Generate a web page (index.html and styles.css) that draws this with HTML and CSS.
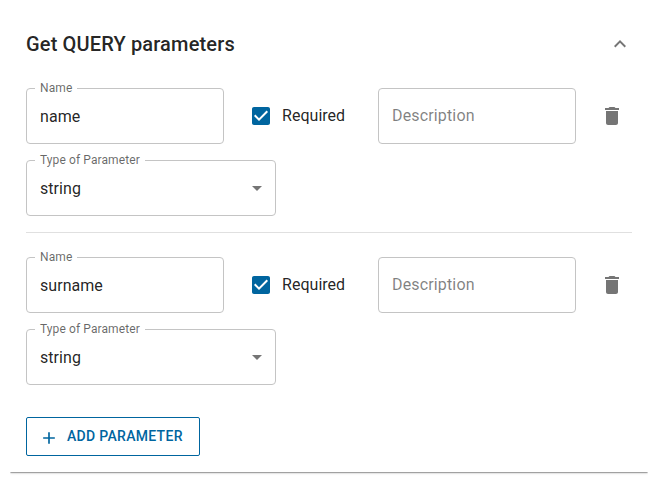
FILE: index.html
```html
<!DOCTYPE html>
<html lang="en">
<head>
<meta charset="utf-8">
<title>Get QUERY parameters</title>
<link rel="stylesheet" href="styles.css">
</head>
<body>
<section class="card">
  <header class="card-header">
    <h2 class="card-title">Get QUERY parameters</h2>
    <svg class="icon icon-muted" viewBox="0 0 24 24"><path d="M12 8l-6 6 1.41 1.41L12 10.83l4.59 4.58L18 14z"/></svg>
  </header>
  <div class="card-body">
    <div class="param">
      <div class="param-row">
        <div class="field field-short"><span class="field-label">Name</span><span class="field-value">name</span></div>
        <label class="check">
          <svg class="icon icon-primary" viewBox="0 0 24 24"><path d="M19 3H5c-1.11 0-2 .9-2 2v14c0 1.1.89 2 2 2h14c1.11 0 2-.9 2-2V5c0-1.1-.89-2-2-2zm-9 14l-5-5 1.41-1.41L10 14.17l7.59-7.59L19 8l-9 9z"/></svg>
          <span class="check-text">Required</span>
        </label>
        <div class="field field-short"><span class="field-placeholder">Description</span></div>
        <svg class="icon icon-muted icon-delete" viewBox="0 0 24 24"><path d="M6 19c0 1.1.9 2 2 2h8c1.1 0 2-.9 2-2V7H6v12zM19 4h-3.5l-1-1h-5l-1 1H5v2h14V4z"/></svg>
      </div>
      <div class="field field-select"><span class="field-label">Type of Parameter</span><span class="field-value">string</span><span class="caret"></span></div>
    </div>
    <hr class="divider">
    <div class="param">
      <div class="param-row">
        <div class="field field-short"><span class="field-label">Name</span><span class="field-value">surname</span></div>
        <label class="check">
          <svg class="icon icon-primary" viewBox="0 0 24 24"><path d="M19 3H5c-1.11 0-2 .9-2 2v14c0 1.1.89 2 2 2h14c1.11 0 2-.9 2-2V5c0-1.1-.89-2-2-2zm-9 14l-5-5 1.41-1.41L10 14.17l7.59-7.59L19 8l-9 9z"/></svg>
          <span class="check-text">Required</span>
        </label>
        <div class="field field-short"><span class="field-placeholder">Description</span></div>
        <svg class="icon icon-muted icon-delete" viewBox="0 0 24 24"><path d="M6 19c0 1.1.9 2 2 2h8c1.1 0 2-.9 2-2V7H6v12zM19 4h-3.5l-1-1h-5l-1 1H5v2h14V4z"/></svg>
      </div>
      <div class="field field-select"><span class="field-label">Type of Parameter</span><span class="field-value">string</span><span class="caret"></span></div>
    </div>
    <button class="add-button" type="button">
      <svg class="icon icon-plus" viewBox="0 0 24 24"><path d="M19 13h-6v6h-2v-6H5v-2h6V5h2v6h6v2z"/></svg>
      ADD PARAMETER
    </button>
  </div>
</section>
</body>
</html>
```
FILE: styles.css
```css
* { box-sizing: border-box; }
html, body { height: 100%; }
body {
  margin: 8px 11px 0 10px;
  background: #fff;
  font-family: Roboto, "Liberation Sans", sans-serif;
  color: rgba(0, 0, 0, 0.87);
  overflow: hidden;
}
.card {
  background: #fff;
  box-shadow: 0 2px 1px -1px rgba(0,0,0,.2), 0 1px 1px 0 rgba(0,0,0,.14), 0 1px 3px 0 rgba(0,0,0,.12);
}
.card-header {
  height: 72px;
  padding: 0 16px;
  display: flex;
  align-items: center;
  justify-content: space-between;
}
.card-title {
  margin: 0;
  font-size: 20px;
  font-weight: 500;
  line-height: 32px;
  letter-spacing: 0.15px;
}
.card-body { padding: 8px 16px 16px; }
.param { display: flex; flex-direction: column; gap: 16px; }
.param-row { display: flex; align-items: center; }
.icon { width: 24px; height: 24px; flex: none; display: block; }
.icon-muted { fill: rgba(0, 0, 0, 0.54); }
.icon-primary { fill: #00659f; }
.icon-delete { margin-left: 24px; }
.field {
  position: relative;
  height: 56px;
  border: 1px solid #c4c4c4;
  border-radius: 4px;
  padding: 0 13px;
  display: flex;
  align-items: center;
  font-size: 16px;
  letter-spacing: 0.05px;
}
.field-short { width: 198px; }
.field-select { width: 250px; }
.field-label {
  position: absolute;
  top: -8px;
  left: 8px;
  padding: 0 5px;
  background: #fff;
  font-size: 12px;
  line-height: 14px;
  letter-spacing: 0.1px;
  color: rgba(0, 0, 0, 0.6);
}
.field-placeholder {
  padding-bottom: 2px;
  letter-spacing: 0.15px;
  color: rgba(0, 0, 0, 0.5);
}
.caret {
  position: absolute;
  right: 13px;
  top: 25px;
  border-left: 5px solid transparent;
  border-right: 5px solid transparent;
  border-top: 5px solid rgba(0, 0, 0, 0.54);
}
.check {
  width: 154px;
  padding-left: 25px;
  display: flex;
  align-items: center;
  gap: 9px;
  font-size: 16px;
  letter-spacing: 0.03px;
}
.check-text { padding-bottom: 2px; }
.divider {
  margin: 16px 0 24px;
  border: 0;
  border-top: 1px solid #e0e0e0;
}
.add-button {
  margin-top: 32px;
  height: 39px;
  width: 174px;
  padding: 0 0 1px 12px;
  display: flex;
  align-items: center;
  gap: 8px;
  background: #fff;
  border: 1px solid #00659f;
  border-radius: 2px;
  color: #00659f;
  font-family: inherit;
  font-size: 14px;
  font-weight: 500;
  letter-spacing: 0.3px;
}
.icon-plus { width: 20px; height: 20px; margin-top: 3px; fill: #00659f; }
```
